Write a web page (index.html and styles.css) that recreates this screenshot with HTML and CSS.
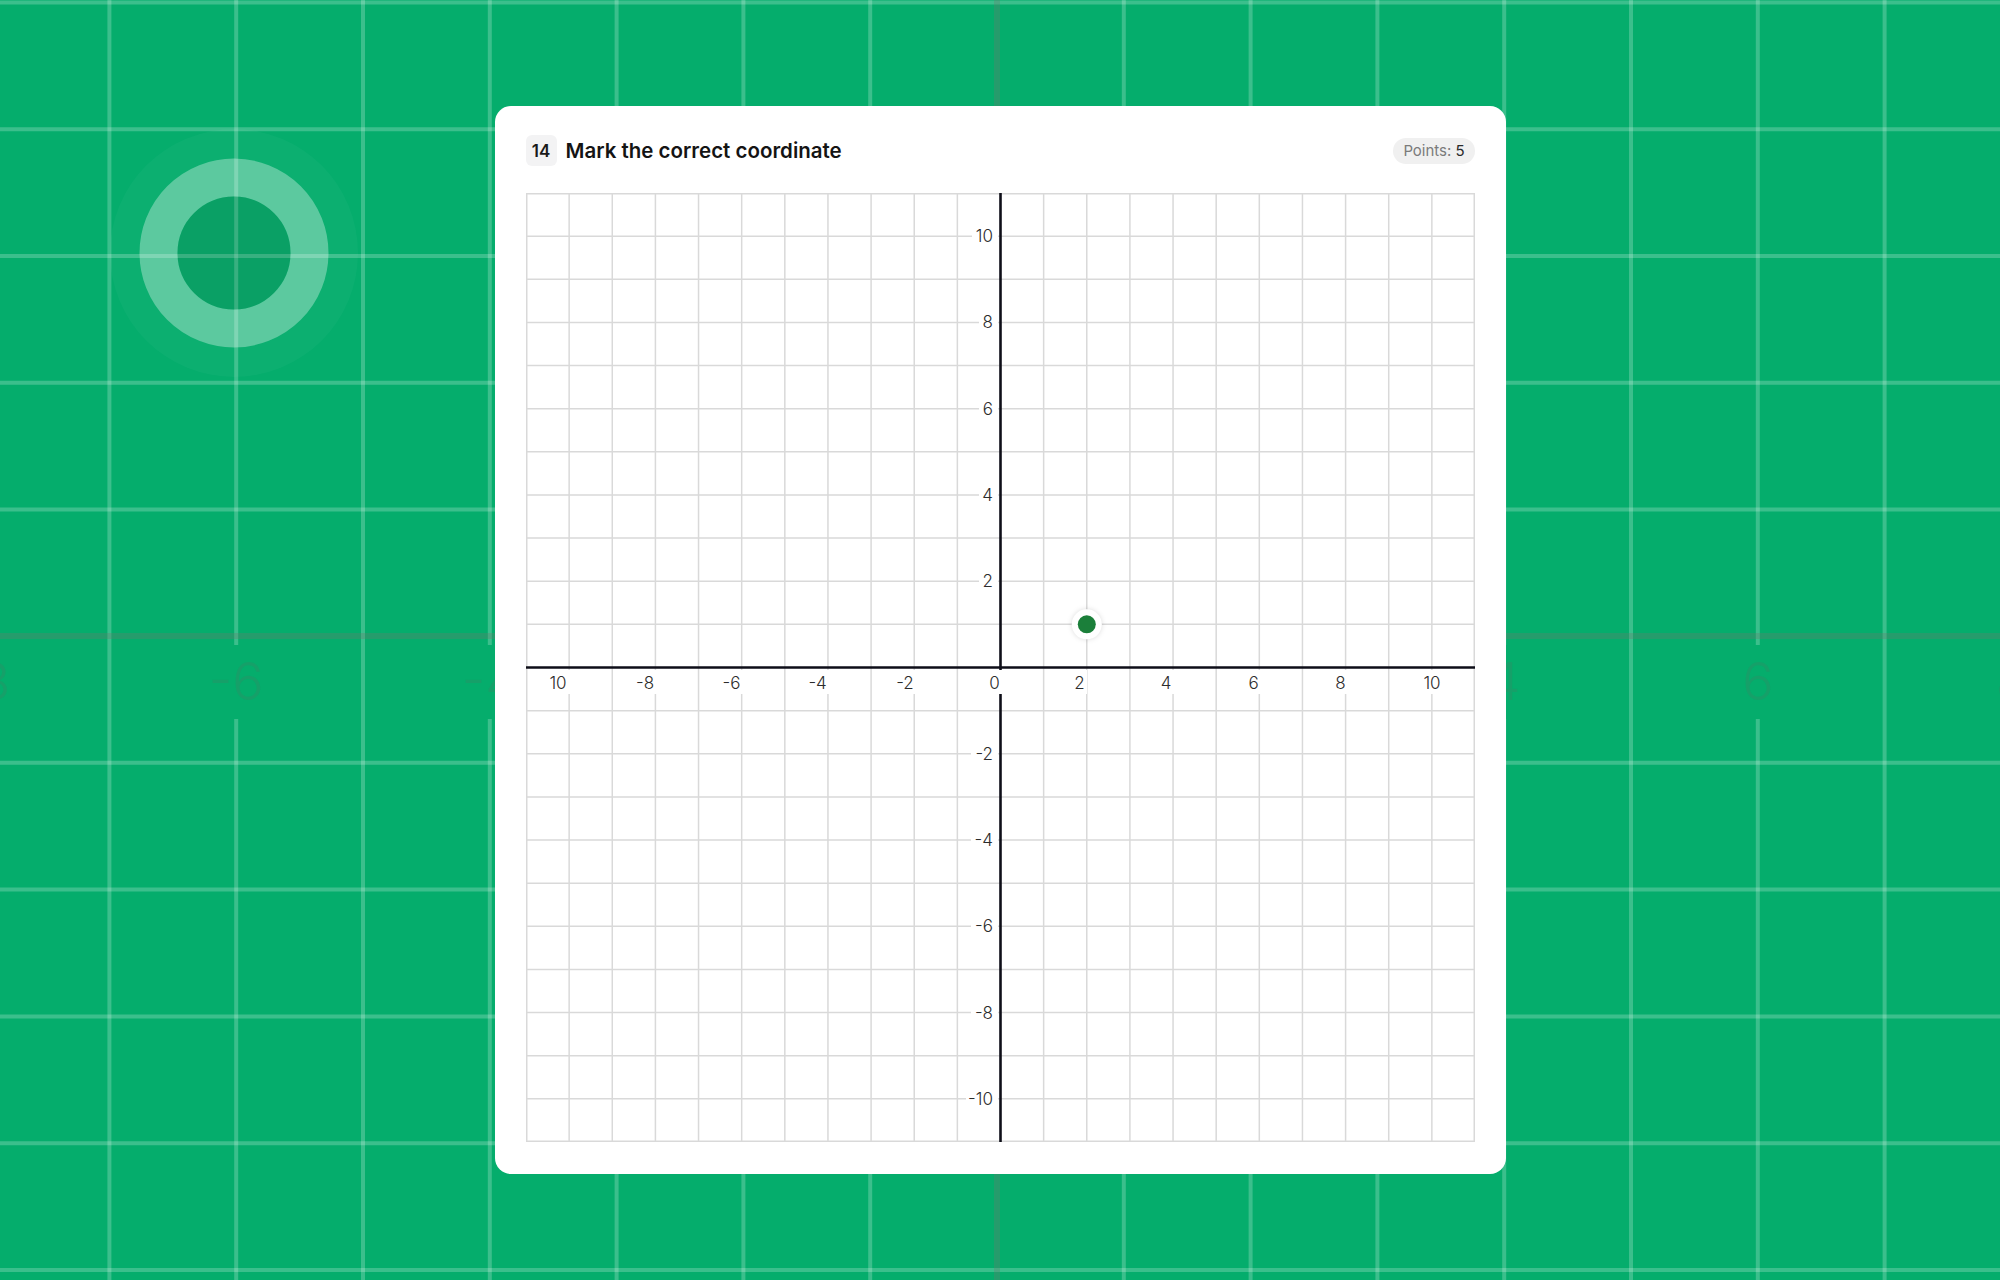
FILE: index.html
```html
<!DOCTYPE html>
<html lang="en">
<head>
<meta charset="utf-8">
<title>Mark the correct coordinate</title>
<link rel="stylesheet" href="styles.css">
</head>
<body>
<svg class="backdrop" width="2000" height="1280" viewBox="0 0 2000 1280" aria-hidden="true">
  <g class="bg-grid">
    <line x1="109.4" y1="0" x2="109.4" y2="1280"/>
    <line x1="236.2" y1="0" x2="236.2" y2="1280"/>
    <line x1="363" y1="0" x2="363" y2="1280"/>
    <line x1="489.8" y1="0" x2="489.8" y2="1280"/>
    <line x1="616.6" y1="0" x2="616.6" y2="1280"/>
    <line x1="743.4" y1="0" x2="743.4" y2="1280"/>
    <line x1="870.2" y1="0" x2="870.2" y2="1280"/>
    <line x1="1123.8" y1="0" x2="1123.8" y2="1280"/>
    <line x1="1250.6" y1="0" x2="1250.6" y2="1280"/>
    <line x1="1377.4" y1="0" x2="1377.4" y2="1280"/>
    <line x1="1504.2" y1="0" x2="1504.2" y2="1280"/>
    <line x1="1631" y1="0" x2="1631" y2="1280"/>
    <line x1="1757.8" y1="0" x2="1757.8" y2="1280"/>
    <line x1="1884.6" y1="0" x2="1884.6" y2="1280"/>
    <line x1="0" y1="2.4" x2="2000" y2="2.4"/>
    <line x1="0" y1="129.2" x2="2000" y2="129.2"/>
    <line x1="0" y1="256" x2="2000" y2="256"/>
    <line x1="0" y1="382.8" x2="2000" y2="382.8"/>
    <line x1="0" y1="509.6" x2="2000" y2="509.6"/>
    <line x1="0" y1="762.8" x2="2000" y2="762.8"/>
    <line x1="0" y1="889.6" x2="2000" y2="889.6"/>
    <line x1="0" y1="1016.4" x2="2000" y2="1016.4"/>
    <line x1="0" y1="1143.2" x2="2000" y2="1143.2"/>
    <line x1="0" y1="1270" x2="2000" y2="1270"/>
  </g>
  <g class="bg-axis">
    <line x1="997" y1="0" x2="997" y2="1280"/>
    <line x1="0" y1="636" x2="2000" y2="636"/>
  </g>
  <g class="bg-label-bg">
    <rect x="-50" y="645" width="65" height="74"/>
    <rect x="204" y="645" width="64" height="74"/>
    <rect x="458" y="645" width="64" height="74"/>
    <rect x="1482" y="645" width="44" height="74"/>
    <rect x="1736" y="645" width="44" height="74"/>
    <rect x="1990" y="645" width="44" height="74"/>
  </g>
  <g class="bg-labels">
    <text x="-17.4" y="700">-8</text>
    <text x="236.2" y="700">-6</text>
    <text x="489.8" y="700">-4</text>
    <text x="1504.2" y="700">4</text>
    <text x="1757.8" y="700">6</text>
    <text x="2011.6" y="700">8</text>
  </g>
  <circle class="ring-halo" cx="234" cy="253" r="124"/>
  <circle class="ring" cx="234" cy="253" r="75.5"/>
  <circle class="ring-core" cx="234" cy="253" r="56.5"/>
</svg>

<main class="stage">
  <section class="card">
    <header class="card-head">
      <div class="title-wrap">
        <span class="q-num">14</span>
        <h1 class="q-title">Mark the correct coordinate</h1>
      </div>
      <span class="points"><span class="points-key">Points:</span> <span class="points-val">5</span></span>
    </header>

    <svg class="plane" width="949" height="949" viewBox="0 0 949 949">
      <g class="grid">
        <line x1="0.75" y1="0" x2="0.75" y2="949"/>
        <line x1="43.14" y1="0" x2="43.14" y2="949"/>
        <line x1="86.27" y1="0" x2="86.27" y2="949"/>
        <line x1="129.41" y1="0" x2="129.41" y2="949"/>
        <line x1="172.55" y1="0" x2="172.55" y2="949"/>
        <line x1="215.68" y1="0" x2="215.68" y2="949"/>
        <line x1="258.82" y1="0" x2="258.82" y2="949"/>
        <line x1="301.95" y1="0" x2="301.95" y2="949"/>
        <line x1="345.09" y1="0" x2="345.09" y2="949"/>
        <line x1="388.23" y1="0" x2="388.23" y2="949"/>
        <line x1="431.36" y1="0" x2="431.36" y2="949"/>
        <line x1="517.64" y1="0" x2="517.64" y2="949"/>
        <line x1="560.77" y1="0" x2="560.77" y2="949"/>
        <line x1="603.91" y1="0" x2="603.91" y2="949"/>
        <line x1="647.05" y1="0" x2="647.05" y2="949"/>
        <line x1="690.18" y1="0" x2="690.18" y2="949"/>
        <line x1="733.32" y1="0" x2="733.32" y2="949"/>
        <line x1="776.45" y1="0" x2="776.45" y2="949"/>
        <line x1="819.59" y1="0" x2="819.59" y2="949"/>
        <line x1="862.73" y1="0" x2="862.73" y2="949"/>
        <line x1="905.86" y1="0" x2="905.86" y2="949"/>
        <line x1="948.25" y1="0" x2="948.25" y2="949"/>
        <line y1="0.75" x1="0" y2="0.75" x2="949"/>
        <line y1="43.14" x1="0" y2="43.14" x2="949"/>
        <line y1="86.27" x1="0" y2="86.27" x2="949"/>
        <line y1="129.41" x1="0" y2="129.41" x2="949"/>
        <line y1="172.55" x1="0" y2="172.55" x2="949"/>
        <line y1="215.68" x1="0" y2="215.68" x2="949"/>
        <line y1="258.82" x1="0" y2="258.82" x2="949"/>
        <line y1="301.95" x1="0" y2="301.95" x2="949"/>
        <line y1="345.09" x1="0" y2="345.09" x2="949"/>
        <line y1="388.23" x1="0" y2="388.23" x2="949"/>
        <line y1="431.36" x1="0" y2="431.36" x2="949"/>
        <line y1="517.64" x1="0" y2="517.64" x2="949"/>
        <line y1="560.77" x1="0" y2="560.77" x2="949"/>
        <line y1="603.91" x1="0" y2="603.91" x2="949"/>
        <line y1="647.05" x1="0" y2="647.05" x2="949"/>
        <line y1="690.18" x1="0" y2="690.18" x2="949"/>
        <line y1="733.32" x1="0" y2="733.32" x2="949"/>
        <line y1="776.45" x1="0" y2="776.45" x2="949"/>
        <line y1="819.59" x1="0" y2="819.59" x2="949"/>
        <line y1="862.73" x1="0" y2="862.73" x2="949"/>
        <line y1="905.86" x1="0" y2="905.86" x2="949"/>
        <line y1="948.25" x1="0" y2="948.25" x2="949"/>
      </g>
      <g class="axis">
        <line x1="474.5" y1="0" x2="474.5" y2="949"/>
        <line x1="0" y1="474.5" x2="949" y2="474.5"/>
      </g>
      <g class="label-bg">
        <rect x="20" y="477" width="24" height="24"/>
        <rect x="108" y="477" width="23" height="24"/>
        <rect x="194" y="477" width="23" height="24"/>
        <rect x="280" y="477" width="23" height="24"/>
        <rect x="368" y="477" width="23" height="24"/>
        <rect x="461" y="477" width="16" height="24"/>
        <rect x="546" y="477" width="15" height="24"/>
        <rect x="632" y="477" width="16" height="24"/>
        <rect x="720" y="477" width="16" height="24"/>
        <rect x="807" y="477" width="16" height="24"/>
        <rect x="894" y="477" width="24" height="24"/>
        <rect x="446" y="34" width="26" height="18"/>
        <rect x="453" y="120" width="19" height="18"/>
        <rect x="453" y="207" width="19" height="18"/>
        <rect x="453" y="293" width="19" height="18"/>
        <rect x="453" y="379" width="19" height="18"/>
        <rect x="445" y="552" width="27" height="18"/>
        <rect x="445" y="638" width="27" height="18"/>
        <rect x="445" y="724" width="27" height="18"/>
        <rect x="445" y="811" width="27" height="18"/>
        <rect x="440" y="897" width="32" height="18"/>
      </g>
      <g class="xlabels">
        <text x="32" y="496">10</text>
        <text x="119" y="496">-8</text>
        <text x="205.5" y="496">-6</text>
        <text x="291.6" y="496">-4</text>
        <text x="379" y="496">-2</text>
        <text x="468.5" y="496">0</text>
        <text x="553.5" y="496">2</text>
        <text x="640" y="496">4</text>
        <text x="727.5" y="496">6</text>
        <text x="814.5" y="496">8</text>
        <text x="906" y="496">10</text>
      </g>
      <g class="ylabels">
        <text x="467" y="49.1">10</text>
        <text x="467" y="135.4">8</text>
        <text x="467" y="221.7">6</text>
        <text x="467" y="308">4</text>
        <text x="467" y="394.2">2</text>
        <text x="467" y="566.8">-2</text>
        <text x="467" y="653">-4</text>
        <text x="467" y="739.3">-6</text>
        <text x="467" y="825.6">-8</text>
        <text x="467" y="911.9">-10</text>
      </g>
      <circle class="dot-halo" cx="560.77" cy="431.36" r="15"/>
      <circle class="dot" cx="560.77" cy="431.36" r="9"/>
    </svg>
  </section>
</main>
</body>
</html>
```
FILE: styles.css
```css
* { box-sizing: border-box; }

html, body {
  margin: 0;
  padding: 0;
}

body {
  width: 2000px;
  height: 1280px;
  overflow: hidden;
  position: relative;
  background: #05ad6c;
  font-family: "Inter", "Noto Sans", "Liberation Sans", sans-serif;
  color: #111;
}

/* decorative canvas behind the card */
.backdrop {
  position: absolute;
  left: 0;
  top: 0;
  z-index: 0;
}

.bg-grid line {
  stroke: rgba(255, 255, 255, 0.22);
  stroke-width: 4;
}

.bg-axis line {
  stroke: rgba(110, 120, 110, 0.32);
  stroke-width: 6;
}

.bg-label-bg rect {
  fill: #05ad6c;
}

.bg-labels text {
  font-family: "Inter", "Noto Sans", sans-serif;
  font-weight: 300;
  font-size: 52px;
  text-anchor: middle;
  fill: rgba(90, 110, 95, 0.2);
}

.ring-halo { fill: rgba(255, 255, 255, 0.03); }
.ring {
  fill: none;
  stroke: rgba(255, 255, 255, 0.33);
  stroke-width: 38;
}
.ring-core { fill: rgba(0, 60, 30, 0.13); }

/* card */
.stage {
  position: relative;
  z-index: 1;
  height: 1280px;
  display: flex;
  align-items: center;
  justify-content: center;
}

.card {
  width: 1011px;
  background: #fff;
  border-radius: 16px;
  padding: 29px 31px 32px;
  display: flex;
  flex-direction: column;
  gap: 27px;
}

.card-head {
  height: 31px;
  display: flex;
  align-items: center;
  justify-content: space-between;
}

.title-wrap {
  display: flex;
  align-items: center;
  gap: 9px;
}

.q-num {
  width: 31px;
  height: 31px;
  border-radius: 6px;
  background: #f3f3f4;
  display: flex;
  align-items: center;
  justify-content: center;
  font-size: 17px;
  font-weight: 600;
  color: #1a1a1a;
}

.q-title {
  margin: 0;
  font-size: 20.5px;
  font-weight: 600;
  color: #141414;
  letter-spacing: 0;
}

.points {
  height: 26px;
  padding: 0 10px;
  border-radius: 13px;
  background: #f0f0f0;
  display: flex;
  align-items: center;
  gap: 4px;
  font-size: 15px;
}
.points-key { color: #7b7b7b; }
.points-val { color: #2a2a2a; }

.plane {
  display: block;
  overflow: visible;
}

.grid line {
  stroke: #d9d9d9;
  stroke-width: 1.5;
}

.axis line {
  stroke: #0e0e18;
  stroke-width: 2.6;
}

.label-bg rect { fill: #fff; }

.xlabels text,
.ylabels text {
  font-family: "Inter", "Noto Sans", sans-serif;
  font-weight: 300;
  font-size: 17px;
  fill: #2c2c2c;
}
.xlabels text { text-anchor: middle; }
.ylabels text { text-anchor: end; }

.dot-halo {
  fill: #fff;
  filter: drop-shadow(0 0 2.5px rgba(0, 0, 0, 0.14));
}
.dot { fill: #1b7f3a; }
```
